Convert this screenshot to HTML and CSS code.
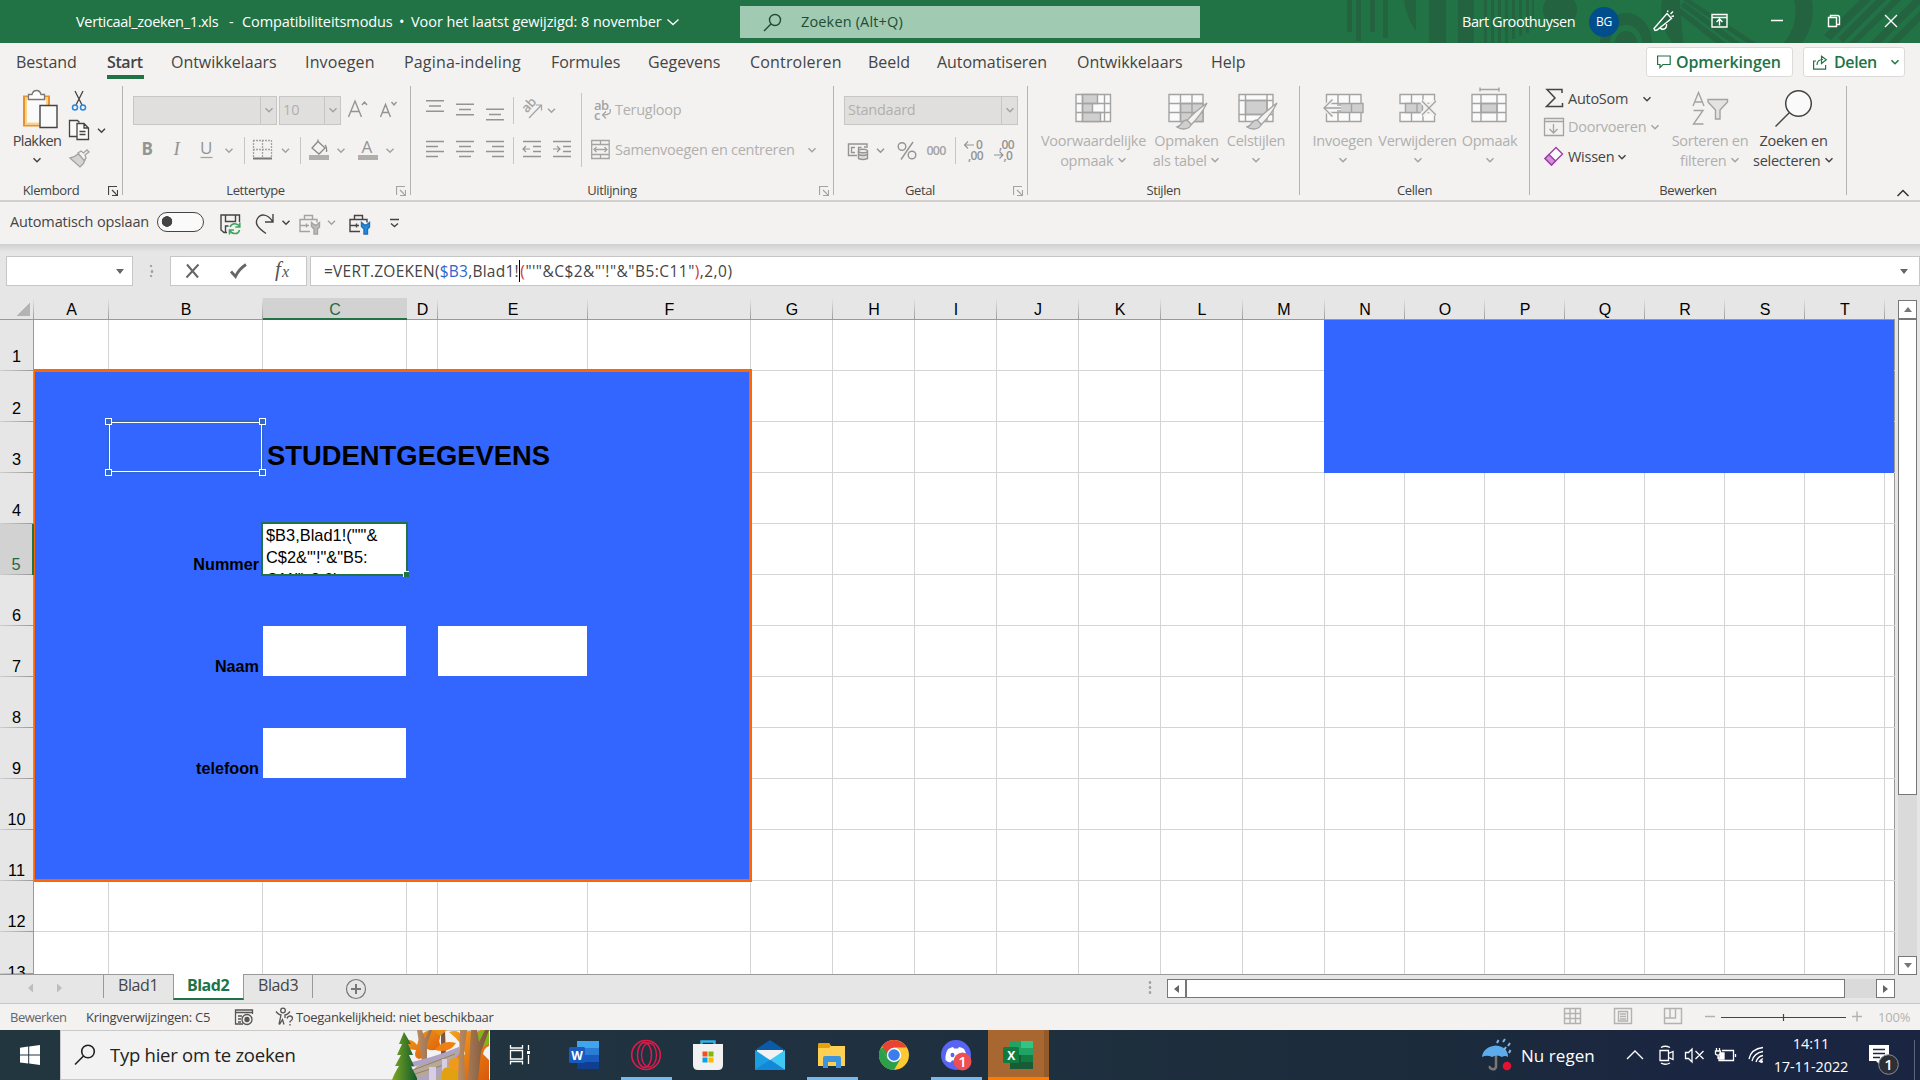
FILE: index.html
```
<!DOCTYPE html>
<html lang="nl">
<head>
<meta charset="utf-8">
<title>Verticaal_zoeken_1.xls</title>
<link rel="stylesheet" href="styles.css">
</head>
<body>
<svg class="defs" aria-hidden="true">
  <defs>
    <path id="cv" d="M-3.500-1.800L0 1.700L3.500-1.800" fill="none" stroke-width="1.500"/>
    <path id="launch" d="M.5 9V.5H9M4 4l5 5M9.500 4v5.500H4" fill="none" stroke-width="1.2"/>
    <g id="brush"><path d="M37 1C29 7 20 14 17 19l4 4C27 17 33 9 37 1z" fill="#f3f2f1" stroke="#a3a3a3" stroke-width="1.300"/><path d="M17 18c-6 0-5 6-10 7 4 3 13 3 14-3z" fill="#cfcfcf" stroke="#a3a3a3" stroke-width="1.300"/></g>
  </defs>
</svg>

<header class="titlebar">
  <svg class="pattern" viewBox="1300 0 620 43" width="620" height="43">
    <g fill="#23633f">
      <path d="M1347 0h5v32h-5zM1356 0h5v41h-5zM1370 0h5v32h-5zM1383 0h5v38h-5zM1404 0h12v31q-10-14-12-31zM1429 0h17v43h-17zM1458 0h16v43h-16zM1484 0h3v43h-3zM1491 0h3v43h-3zM1498 0h3v43h-3zM1505 0h3v43h-3zM1512 0h3v39h-3zM1519 0h3v36h-3zM1526 0h3v33h-3zM1532 0h2v28h-2z"/>
      <circle cx="1560" cy="10" r="17"/>
      <path d="M1600 43a26 30 0 0 1 52 0h-10a16 18 0 0 0-32 0zM1615 43a11 12 0 0 1 22 0z"/>
      <path d="M1668 0h12v8l4 43h-6q-12-24-2-43zM1662 0h18v8l-4 35h-4q-14-20-10-43zM1680 8l46 35h-10l-38-30zM1684 2l56 41h-9l-50-37zM1690 0l66 43h-9l-64-43zM1794 0h18q4 24-10 43h-18q16-20 10-43zM1824 35l36-35h11l-40 40zM1838 38l38-38h10l-43 43zM1852 40l40-40h9l-44 43h-8zM1870 43l43-43h7v4l-39 39zM1888 43l32-32v10l-22 22z"/>
    </g>
  </svg>
  <span class="t-file">Verticaal_zoeken_1.xls</span><span class="t-dash">-</span><span class="t-mode">Compatibiliteitsmodus</span><span class="t-dot">•</span><span class="t-mod">Voor het laatst gewijzigd: 8 november</span>
  <svg class="t-chev" viewBox="665 15 16 14" width="16" height="14"><path d="M667.500 19.500l5.500 5 5.500-5" fill="none" stroke="#fff" stroke-width="1.300"/></svg>
  <div class="search">
    <svg viewBox="0 0 20 20" width="20" height="20"><path d="M8.200 11.800L1 19" stroke="#1e4d33" stroke-width="1.400"/><circle cx="12" cy="8" r="5.500" fill="none" stroke="#1e4d33" stroke-width="1.400"/></svg>
    <span>Zoeken (Alt+Q)</span>
  </div>
  <span class="user">Bart Groothuysen</span>
  <span class="avatar">BG</span>
  <svg class="winbtns" viewBox="1640 0 280 43" width="280" height="43" fill="none" stroke="#fff" stroke-width="1.400">
    <path d="M1654 28.500l13-15 4.500 5-14.500 11.500-2 .5zM1660 27q1 3 4 2t2.500-5M1667.500 12l.5-1.500M1670.500 14l2.500-2.500M1671.500 16.500l2.500-.5"/>
    <path d="M1712 14.500h15v12.500h-15zM1712 17.500h15M1719.500 25.500v-6M1716.500 22l3-3 3 3"/>
    <path d="M1771 20.500h12M1828.500 17.500h8v9h-8z"/><path d="M1830.500 17.500v-2h7q2 0 2 2v7h-3"/>
    <path d="M1885 15l12 12M1897 15l-12 12"/>
  </svg>
</header>

<nav class="tabs">
  <span style="width:91px">Bestand</span><span class="on" style="width:64px">Start</span><span style="width:134px">Ontwikkelaars</span><span class="wide" style="width:99px">Invoegen</span><span class="wide" style="width:147px">Pagina-indeling</span><span style="width:97px">Formules</span><span style="width:102px">Gegevens</span><span class="wide" style="width:118px">Controleren</span><span style="width:69px">Beeld</span><span style="width:140px">Automatiseren</span><span style="width:134px">Ontwikkelaars</span><span style="width:80px">Help</span>
  <button class="pill comments"><svg viewBox="0 0 14 14" width="14" height="14" fill="none" stroke="#217346" stroke-width="1.200"><path d="M.6 1h12.600v8.500H6l-3 3v-3H.6z"/></svg>Opmerkingen</button>
  <button class="pill share"><svg viewBox="0 0 15 15" width="15" height="15" fill="none" stroke="#217346" stroke-width="1.200"><path d="M3 6H.6v8.200h12V10M4 10c0-4 3-5.500 6-5.500M8.500 1.200l4.800 3.500-4.800 3.800z"/></svg>Delen<svg class="pc" viewBox="-5 -4 10 8" width="10" height="8" stroke="#217346"><use href="#cv"/></svg></button>
</nav>

<section class="ribbon">
  <div class="group g-clip">
    <div class="body">
      <div class="big dark clipbtn">
        <svg viewBox="8 86 58 44" width="58" height="44"><path d="M24 96.500h25v29H24z" fill="#fafafa" stroke="#e8912d" stroke-width="2"/><path d="M26 98.500h21v25H26z" fill="none" stroke="#f8d588" stroke-width="2"/><path d="M28.500 99.500v-5h3.500q1-4 4.500-4t4.500 4h3.500v5z" fill="#fff" stroke="#777" stroke-width="1.300"/><path d="M40 105.500h17v22H40z" fill="#fafafa" stroke="#444" stroke-width="1.400"/></svg>
        <span>Plakken</span><span><svg class="c" viewBox="-5 -3 10 6"><use href="#cv"/></svg></span>
      </div>
      <div class="col">
        <svg viewBox="66 86 50 29" width="50" height="29" fill="none"><path d="M75 91l7 14M83 91l-7 14" stroke="#444" stroke-width="1.300"/><circle cx="75" cy="107.500" r="2.500" stroke="#2b88d8" stroke-width="1.500"/><circle cx="83" cy="107.500" r="2.500" stroke="#2b88d8" stroke-width="1.500"/></svg>
        <svg viewBox="66 115 50 30" width="50" height="30" fill="#fafafa" stroke="#444" stroke-width="1.300"><path d="M77 136.500h-7.500v-16h8l2 2"/><path d="M77 123.500h7l4.500 4.500v11.500H77zM84 123.500v4.500h4.500M79.500 131.500h6M79.500 134.500h6"/><use href="#cv" x="101.500" y="130.500"/></svg>
        <svg viewBox="66 145 50 30" width="50" height="30" fill="#d6d4d2" stroke="#a3a3a3" stroke-width="1.300"><path d="M70 158l10 9q4-3 5-7l-7-6q-3 3-8 4z"/><path d="M78 153l3-2 2.500 2 3.500-3 2 2-4 3 1 3-2 2.500z" fill="#f3f2f1"/></svg>
      </div>
    </div>
    <div class="name">Klembord</div>
    <svg class="launch dk" viewBox="0 0 10 10"><use href="#launch"/></svg>
  </div>

  <div class="group g-font">
    <div class="body rows">
      <div class="row">
        <div class="combo cb1"><i><svg class="c" viewBox="-5 -3 10 6"><use href="#cv"/></svg></i></div>
        <div class="combo cb2">10<i><svg class="c" viewBox="-5 -3 10 6"><use href="#cv"/></svg></i></div>
        <svg viewBox="341 95 66 30" width="66" height="30" fill="none" stroke="#949494" stroke-width="1.400"><path d="M348.500 117l6.500-16 6.500 16M351 111.500h8M362 105l2.500-3 2.500 3M380.500 117l5-12.500 5 12.500M382 112.500h7M391.500 102l2.500 3 2.500-3"/></svg>
      </div>
      <svg class="strip" viewBox="123 135 287 30" width="287" height="30" fill="none" stroke="#a3a3a3" stroke-width="1.300">
        <g class="let"><text x="141.500" y="155" class="b">B</text><text x="173.500" y="155" class="i">I</text><text x="200" y="154">U</text><text x="361.500" y="153">A</text></g>
        <path d="M200.500 157.500h12" /><use href="#cv" x="229" y="150.500"/>
        <path d="M244.500 137v27M300.500 137v27" stroke="#c8c6c4" stroke-width="1"/>
        <path d="M253.500 140v18M271.500 140v18M253 140.500h18M253 149.500h18M262.500 140v18" stroke-dasharray="2 1"/><path d="M253 158.500h19" stroke="#777" stroke-width="2"/>
        <use href="#cv" x="285.500" y="150.500"/>
        <path d="M312 148l6-6.500 7 6.500-6 6zM318 142v-2.500M325 145q2 2 1.500 7" stroke="#8a8a8a"/><path d="M309 155h20v5h-20zM358 155h20v5h-20z" fill="#b1afad" stroke="none"/>
        <use href="#cv" x="341" y="150.500"/><use href="#cv" x="390" y="150.500"/>
      </svg>
    </div>
    <div class="name">Lettertype</div>
    <svg class="launch" viewBox="0 0 10 10"><use href="#launch"/></svg>
  </div>

  <div class="group g-align">
    <div class="body">
      <svg class="strip" viewBox="411 86 180 90" width="180" height="90" fill="none" stroke="#949494" stroke-width="1.500">
        <path d="M426 100.700h18M429 106h12M426 111.200h18M456 104.200h18M459 109.500h12M456 114.700h18M486 109.200h18M489 114.500h12M486 119.700h18"/>
        <path d="M426 141.500h18M426 146.500h12M426 151.600h18M426 156.600h12M456 141.500h18M459 146.500h12M456 151.600h18M459 156.600h12M486 141.500h18M492 146.500h12M486 151.600h18M492 156.600h12"/>
        <path d="M523 141.500h18M533 146.500h8M533 151.600h8M523 156.600h18M553 141.500h18M563 146.500h8M563 151.600h8M553 156.600h18"/>
        <path d="M530 149h-7M526 146l-3 3 3 3M553 149h7M557 146l3 3-3 3" stroke-width="1.200"/>
        <path d="M513.500 97v27M513.500 137v27M581.500 93v74" stroke="#c8c6c4" stroke-width="1"/>
        <path d="M529 118l12.500-13M536 105h5.500v5.500" stroke="#a3a3a3" stroke-width="1.200"/>
        <text class="ab" transform="translate(527 113.500) rotate(-48)">ab</text>
        <use href="#cv" x="551.500" y="110.500" stroke="#a3a3a3"/>
      </svg>
      <div class="rows wrapcol">
        <div class="row"><svg viewBox="591 95 24 30" width="24" height="30"><text class="ab" x="594" y="109.500">ab</text><text class="ab" x="594" y="119.500">c</text><path d="M610 109q2 6-7 6M606 111.500l-3.500 3.500 3.500 3.500" fill="none" stroke="#a3a3a3" stroke-width="1.200"/></svg><span>Terugloop</span></div>
        <div class="row"><svg viewBox="591 135 24 30" width="24" height="30" fill="none" stroke="#a3a3a3" stroke-width="1.300"><path d="M591.700 140.500h17.500v18h-17.500zM591.700 144.500h17.500M591.700 154.500h17.500M600.500 140.500v4M600.500 154.500v4M594 149.500h13M596.500 147l-2.500 2.500 2.500 2.500M604.500 147l2.500 2.500-2.500 2.500"/></svg><span class="mc">Samenvoegen en centreren</span><svg class="c" viewBox="-5 -3 10 6"><use href="#cv"/></svg></div>
      </div>
    </div>
    <div class="name">Uitlijning</div>
    <svg class="launch" viewBox="0 0 10 10"><use href="#launch"/></svg>
  </div>

  <div class="group g-num">
    <div class="body rows">
      <div class="row"><div class="combo cb3">Standaard<i><svg class="c" viewBox="-5 -3 10 6"><use href="#cv"/></svg></i></div></div>
      <svg class="strip" viewBox="834 135 193 30" width="193" height="30" fill="none" stroke="#949494" stroke-width="1.400">
        <path d="M857 155.500h-8.500v-11.500h18.500v4"/><path d="M855 147.500h-3.500v5h3.500M858.500 153v-5.500h3M864 147h2" stroke-width="1.300"/>
        <path d="M858.500 151v7.500q4.500 2 9 0V151" fill="#ddd"/><ellipse cx="863" cy="151" rx="4.500" ry="1.800" fill="#eee"/><path d="M858.500 154.500q4.500 2 9 0"/>
        <use href="#cv" x="880.500" y="150.500"/>
        <g><circle cx="902" cy="146.500" r="3.800"/><circle cx="912" cy="155" r="3.800"/><path d="M913 142l-12 17.500"/></g>
        <text class="z3" x="926.500" y="154.500">000</text><path d="M955.500 137v27" stroke="#c8c6c4" stroke-width="1"/>
        <g class="dec"><text x="976" y="149">0</text><text x="968" y="159.500">,00</text><text x="999" y="149">,00</text><text x="1003.500" y="159.500">,0</text></g>
        <path d="M974 145h-9.500M968 141.500l-3.500 3.500 3.500 3.500M994 155h9M999.500 151.500l3.500 3.500-3.500 3.500" stroke-width="1.100"/>
      </svg>
    </div>
    <div class="name">Getal</div>
    <svg class="launch" viewBox="0 0 10 10"><use href="#launch"/></svg>
  </div>

  <div class="group g-style">
    <div class="body">
      <div class="big" style="width:118px"><svg viewBox="0 0 50 44" width="50" height="44" fill="#fafafa" stroke="#a3a3a3" stroke-width="1.400"><path d="M7 8.500h34.500v27H7z"/><path d="M13.500 8.500h15v9h-15zM13.500 17.500h10v9h-10zM13.500 26.500h18v9h-18z" fill="#cfcfcf"/><path d="M7 17.500h34.500M7 26.500h34.500M13.500 8v27M35.500 8v27"/></svg><span>Voorwaardelijke</span><span>opmaak <svg class="c" viewBox="-5 -3 10 6"><use href="#cv"/></svg></span></div>
      <div class="big" style="width:68px"><svg viewBox="0 0 50 44" width="50" height="44" fill="#fafafa" stroke="#a3a3a3" stroke-width="1.400"><path d="M7 8.500h34v27H7z"/><path d="M18.500 17.500H41v18H18.500z" fill="#cfcfcf"/><path d="M7 17.500h34M7 26.500h34M18.500 8v27M30 8v27"/><use href="#brush" x="8" y="16"/></svg><span>Opmaken</span><span>als tabel <svg class="c" viewBox="-5 -3 10 6"><use href="#cv"/></svg></span></div>
      <div class="big" style="width:71px"><svg viewBox="0 0 50 44" width="50" height="44" fill="#fafafa" stroke="#a3a3a3" stroke-width="1.400"><path d="M7 8.500h34v27H7z"/><path d="M13.500 14.500H35v14H13.500z" fill="#cfcfcf"/><path d="M7 14.500h34M7 28.500h34M13.500 8v27M35 8v27"/><use href="#brush" x="8" y="16"/></svg><span>Celstijlen</span><span><svg class="c" viewBox="-5 -3 10 6"><use href="#cv"/></svg></span></div>
    </div>
    <div class="name">Stijlen</div>
  </div>

  <div class="group g-cells">
    <div class="body">
      <div class="big" style="width:72px"><svg viewBox="0 0 50 44" width="50" height="44" fill="#fafafa" stroke="#a3a3a3" stroke-width="1.400"><path d="M8.500 8.500h34.500v27H8.500zM20 8v27M31.500 8v27"/><path d="M22 17.500h23v9H22z" fill="#cfcfcf"/><path d="M8.500 17.500h13M8.500 26.500h13M33.500 17.500v9"/><path d="M23 22H7M14.500 13.500L6 22l8.500 8.500" fill="none" stroke="#f3f2f1" stroke-width="4"/><path d="M23 22H7M14.500 13.500L6 22l8.500 8.500" fill="none"/></svg><span>Invoegen</span><span><svg class="c" viewBox="-5 -3 10 6"><use href="#cv"/></svg></span></div>
      <div class="big" style="width:78px"><svg viewBox="0 0 50 44" width="50" height="44" fill="#fafafa" stroke="#a3a3a3" stroke-width="1.400"><path d="M7 8.500h34.500v9H7zM7 26.500h34.500v9H7zM18.500 8v9M30 8v9M18.500 26v9M30 26v9"/><path d="M12.500 17.500h17v9h-17zM24 17.500v9" fill="#cfcfcf"/><path d="M29 15l13 14M42 15L29 29" stroke="#f3f2f1" stroke-width="5"/><path d="M29 15l14 14M43 15L29 29"/></svg><span>Verwijderen</span><span><svg class="c" viewBox="-5 -3 10 6"><use href="#cv"/></svg></span></div>
      <div class="big" style="width:66px"><svg viewBox="0 0 50 44" width="50" height="44" fill="#fafafa" stroke="#a3a3a3" stroke-width="1.400"><path d="M7 8.500h34v27H7z"/><path d="M16 17.500h16v9H16z" fill="#cfcfcf"/><path d="M7 17.500h34M7 26.500h34M16 8v27M32 8v27M15 3.500h19M15 1.500v4M34 1.500v4" fill="none"/></svg><span>Opmaak</span><span><svg class="c" viewBox="-5 -3 10 6"><use href="#cv"/></svg></span></div>
    </div>
    <div class="name">Cellen</div>
  </div>

  <div class="group g-edit">
    <div class="body">
      <div class="editcol">
        <div class="row dark"><svg viewBox="1540 86 28 26" width="28" height="26"><path d="M1562 93v-3.500h-15l8 8.500-8.500 8.500h16V103" fill="none" stroke="#444" stroke-width="1.500"/></svg><span style="width:74px">AutoSom</span><svg class="c" viewBox="-5 -3 10 6"><use href="#cv"/></svg></div>
        <div class="row"><svg viewBox="1540 112 28 30" width="28" height="30" fill="none" stroke="#a3a3a3" stroke-width="1.300"><path d="M1544.500 118.500h19v17h-19zM1544.500 121.500h19M1553.500 124v8.500M1549.500 129l4 4 4-4" fill="#f3f2f1"/></svg><span style="width:82px">Doorvoeren</span><svg class="c" viewBox="-5 -3 10 6"><use href="#cv"/></svg></div>
        <div class="row dark"><svg viewBox="1540 142 28 30" width="28" height="30" stroke="#9b3fa5" stroke-width="1.400"><path d="M1545 158.500l11-11 6.500 6.500-11 11z" fill="#fafafa"/><path d="M1545 158.500l4-4 6.500 6.500-4 4z" fill="#d48fd8"/></svg><span style="width:49px">Wissen</span><svg class="c" viewBox="-5 -3 10 6"><use href="#cv"/></svg></div>
      </div>
      <div class="big" style="width:80px"><svg viewBox="1685 86 50 44" width="50" height="44" fill="none" stroke="#a3a3a3" stroke-width="1.400"><path d="M1693 106l5.500-13.500 5.500 13.500M1695 102h7M1693.500 110.500h9.500l-9.500 13.500h10"/><path d="M1708 99.500h19.500v2.500l-7.500 8v9h-4.500v-9l-7.500-8z" fill="#e3e3e3"/></svg><span>Sorteren en</span><span>filteren <svg class="c" viewBox="-5 -3 10 6"><use href="#cv"/></svg></span></div>
      <div class="big dark" style="width:87px"><svg viewBox="1769 86 50 44" width="50" height="44" fill="#fafafa" stroke="#444" stroke-width="1.500"><circle cx="1798.500" cy="103.500" r="12.800"/><path d="M1789.500 112.500l-14 14"/></svg><span>Zoeken en</span><span>selecteren <svg class="c" viewBox="-5 -3 10 6"><use href="#cv"/></svg></span></div>
    </div>
    <div class="name">Bewerken</div>
  </div>
  <svg class="collapse" viewBox="0 0 14 8" width="14" height="8"><path d="M1.500 7L7 1.500 12.500 7" fill="none" stroke="#333" stroke-width="1.500"/></svg>
</section>

<section class="qat">
  <span class="auto">Automatisch opslaan</span>
  <span class="toggle"></span>
  <svg viewBox="210 202 200 42" width="200" height="42" fill="none" stroke="#444" stroke-width="1.400">
    <path d="M227 232.500h-3l-3-2.500v-15h18.500v7M225.500 215v6.500h10V215M225.500 232v-6h3"/><path d="M230 227q2-4 6-3t3.500 3M239.500 230q-1 4-5 3.500t-4.500-3.500M239.800 222.500v4.500h-4.500M229.500 234.500V230h4.500" stroke="#3ba55d" stroke-width="1.600"/>
    <path d="M273 214v8h-8M272.500 221.500c-5-8-12-8-15-3s0 9 8.500 15"/><use href="#cv" x="286" y="222.500"/>
    <g stroke="#a3a3a3"><path d="M310 231.500h-10v-12h17v3M304.500 219v-3.500h8v3.500M300 225.500h9M306.500 223.500v4"/><path d="M311.500 222.500v4l2.500 2.500v5h3.500v-5l2-2v-4.500l-3 2.500h-2z" fill="#bbb"/><use href="#cv" x="331.500" y="222.500"/></g>
    <path d="M360 231.500h-10v-12h17v3M354.500 219v-3.500h8v3.500M350 225.500h9M356.500 223.500v4"/><path d="M361.500 222.500v4l2.500 2.500v5h3.500v-5l2-2v-4.500l-3 2.500h-2z" fill="#2b88d8" stroke="#1a6fc0"/>
    <path d="M390 219.500h9M391 223.500l3.500 3 3.500-3"/>
  </svg>
</section>

<section class="formulabar">
  <div class="namebox"><b class="tri"></b></div>
  <div class="grip"></div>
  <div class="fxbox">
    <svg viewBox="171 257 134 28" width="134" height="28" fill="none" stroke="#666"><path d="M187 264.500l11 13M198.500 264.500l-12 13" stroke-width="2"/><path d="M231 271.500l4.500 5q3-7 10.500-12" stroke-width="2.800"/><text class="fx" x="275" y="276">f</text><text class="fx s" x="282" y="277">x</text></svg>
  </div>
  <div class="formula"><span class="fa">=VERT.ZOEKEN(<em class="blue">$B3</em>,Blad1!</span><b class="caret"></b><span class="fb"><em class="red">(</em>"'"&amp;C$2&amp;"'!"&amp;"B5:C11"<em class="red">)</em>,2,0)</span><b class="tri"></b></div>
</section>

<section class="sheetwrap">
  <div class="sheet">
    <div class="h corner"></div>
    <div class="h">A</div><div class="h">B</div><div class="h sel">C</div><div class="h">D</div><div class="h">E</div><div class="h">F</div><div class="h">G</div><div class="h">H</div><div class="h">I</div><div class="h">J</div><div class="h">K</div><div class="h">L</div><div class="h">M</div><div class="h">N</div><div class="h">O</div><div class="h">P</div><div class="h">Q</div><div class="h">R</div><div class="h">S</div><div class="h">T</div><div class="h last"></div>

    <div class="r up one" style="grid-row:2">1</div><div class="r up" style="grid-row:3">2</div><div class="r up" style="grid-row:4">3</div><div class="r up" style="grid-row:5">4</div><div class="r sel" style="grid-row:6">5</div><div class="r" style="grid-row:7">6</div><div class="r" style="grid-row:8">7</div><div class="r" style="grid-row:9">8</div><div class="r" style="grid-row:10">9</div><div class="r" style="grid-row:11">10</div><div class="r" style="grid-row:12">11</div><div class="r" style="grid-row:13">12</div><div class="r part" style="grid-row:14">13</div>

    <div class="cl" style="grid-column:2"></div><div class="cl" style="grid-column:3"></div><div class="cl" style="grid-column:4"></div><div class="cl" style="grid-column:5"></div><div class="cl" style="grid-column:6"></div><div class="cl" style="grid-column:7"></div><div class="cl" style="grid-column:8"></div><div class="cl" style="grid-column:9"></div><div class="cl" style="grid-column:10"></div><div class="cl" style="grid-column:11"></div><div class="cl" style="grid-column:12"></div><div class="cl" style="grid-column:13"></div><div class="cl" style="grid-column:14"></div><div class="cl" style="grid-column:15"></div><div class="cl" style="grid-column:16"></div><div class="cl" style="grid-column:17"></div><div class="cl" style="grid-column:18"></div><div class="cl" style="grid-column:19"></div><div class="cl" style="grid-column:20"></div><div class="cl" style="grid-column:21"></div><div class="cl edge" style="grid-column:22"></div>
    <div class="rl" style="grid-row:2"></div><div class="rl" style="grid-row:3"></div><div class="rl" style="grid-row:4"></div><div class="rl" style="grid-row:5"></div><div class="rl" style="grid-row:6"></div><div class="rl" style="grid-row:7"></div><div class="rl" style="grid-row:8"></div><div class="rl" style="grid-row:9"></div><div class="rl" style="grid-row:10"></div><div class="rl" style="grid-row:11"></div><div class="rl" style="grid-row:12"></div><div class="rl" style="grid-row:13"></div><div class="rl bottom" style="grid-row:14"></div>

    <div class="panel"></div>
    <div class="panel right"></div>
    <div class="refbox"><i></i><i></i><i></i><i></i></div>
    <div class="heading">STUDENTGEGEVENS</div>
    <div class="lab" style="grid-row:6">Nummer</div>
    <div class="lab" style="grid-row:8">Naam</div>
    <div class="lab" style="grid-row:10">telefoon</div>
    <div class="field" style="grid-area:8/4"></div>
    <div class="field" style="grid-area:8/6"></div>
    <div class="field" style="grid-area:10/4"></div>
    <div class="edit"><div class="edittext">$B3,Blad1!("'"&amp;<br>C$2&amp;"'!"&amp;"B5:<br>C11"),2,0)</div><i class="handle"></i></div>
  </div>
  <div class="vscroll"><div class="sb up"><b></b></div><div class="track"><div class="thumb"></div></div><div class="sb down"><b></b></div></div>
</section>

<section class="sheettabs">
  <svg viewBox="0 975 103 28" width="103" height="28" fill="#bdbdbd"><path d="M33 983.500v9l-5-4.500zM57 983.500v9l5-4.500z"/></svg>
  <span class="st first">Blad1</span><span class="st active">Blad2</span><span class="st third">Blad3</span>
  <svg class="plus" viewBox="0 0 22 22" width="22" height="22" fill="none" stroke="#777"><circle cx="11" cy="11" r="9.500" stroke-width="1.200"/><path d="M11 6v10M6 11h10" stroke-width="2"/></svg>
  <div class="grip h"></div>
  <div class="hscroll"><div class="sb left"><b></b></div><div class="hthumb"></div><div class="sb right"><b></b></div></div>
</section>

<footer class="status">
  <span class="s1">Bewerken</span><span class="s2">Kringverwijzingen: C5</span>
  <svg class="macro" viewBox="234 1007 20 20" width="20" height="20" fill="none" stroke="#555" stroke-width="1.300"><path d="M243 1024h-7.500v-14h17v4M236 1012.500h16.500M238 1016h4M238 1019h3M238 1022h3"/><circle cx="247" cy="1019.500" r="5"/><circle cx="247" cy="1019.500" r="2" fill="#555"/></svg>
  <svg class="acc" viewBox="274 1006 21 21" width="21" height="21" fill="none" stroke="#555" stroke-width="1.300"><circle cx="283" cy="1010.500" r="2.300"/><path d="M276 1011.500q3 3.500 5 3.500l-2 9.500M290 1011.500q-3 3.500-5 3.500v3M279.500 1024.500l3-5 1.500 5M287 1018.500q.5-2.500 3-2.500t2.500 2.500q0 1.500-2.500 3v1M290 1024v1.500"/></svg>
  <span class="s3">Toegankelijkheid: niet beschikbaar</span>
  <svg class="views" viewBox="1560 1005 308 25" width="308" height="25" fill="none" stroke="#b4b2b0" stroke-width="1.400"><path d="M1564.500 1008.500h16v15h-16zM1564.500 1013.500h16M1564.500 1018.500h16M1570 1008v16M1575.500 1008v16M1614.500 1008.500h17v15h-17zM1618.500 1011.500h9v9.500h-9zM1620 1014h6M1620 1016.500h6M1620 1019h6M1664.500 1008.500h17v15h-17zM1664.500 1018h11v-9.500M1670 1008.500v9.500M1705 1016.500h10M1852 1016.500h10M1857 1011.500v10"/><path d="M1721 1017.500h125M1783.500 1014v7" stroke="#444" stroke-width="1.200"/></svg>
  <span class="s4">100%</span>
</footer>

<footer class="taskbar">
  <div class="start"><svg viewBox="0 0 20 20" width="20" height="20" fill="#fff"><path d="M0 2.700l8.200-1.100v8H0zM9.200 1.400L20 0v9.600H9.200zM0 10.500h8.200v8L0 17.400zM9.200 10.500H20V20L9.200 18.600z"/></svg></div>
  <div class="tsearch">
    <svg class="mag" viewBox="0 0 22 22" width="22" height="22" fill="none" stroke="#222" stroke-width="1.600"><circle cx="14" cy="7.500" r="6.300"/><path d="M9.500 12L1 20.500"/></svg>
    <span>Typ hier om te zoeken</span>
    <svg class="autumn" viewBox="392 1030 98 50" width="98" height="50">
      <defs><linearGradient id="pine" x1="0" x2="1"><stop offset="0" stop-color="#7ea622"/><stop offset="1" stop-color="#0f5a2c"/></linearGradient><linearGradient id="leaf" x1="0" y1="0" x2="1" y2="1"><stop offset="0" stop-color="#f5a31c"/><stop offset="1" stop-color="#d9570b"/></linearGradient><linearGradient id="bark"><stop offset="0" stop-color="#b98c64"/><stop offset="1" stop-color="#7a5238"/></linearGradient></defs>
      <path d="M404 1042q8-5 14 3 3-12 10-14l6-1q10 1 6 11 2 4 0 7-5 4-12 1-1 9-8 10-6-2-3-9-10 0-13-8z" fill="url(#leaf)"/>
      <path d="M418 1030h5l3 9 4-9h3l-5 14v18h-5zM442 1030h4l1 28h-5z" fill="url(#bark)"/>
      <path d="M436 1050q7-11 21-7-7 11-21 7z" fill="#ef7f13"/><path d="M434 1030h14l-7 6z" fill="#e58d14"/>
      <path d="M404 1080l14-14 42-19v33z" fill="#b7a996"/><path d="M414 1070l42-16M409 1076l46-14M422 1064l36-14" stroke="#8f8174" fill="none"/>
      <path d="M403 1064q28-5 57-17v3q-20 11-54 19zM412 1080q26-6 48-28v6q-16 18-34 22z" fill="#aea3c5"/>
      <path d="M430 1067h7v13h-7zM443 1059h5v16h-5z" fill="#d6cee4"/>
      <path d="M450 1032q9-3 12 3 7-7 14-2 10-7 14 0v13q-5 2-6 8l6 6v20h-29q-4-8 0-14-8-8 0-12 3 3 5 0-2-11-16-22z" fill="url(#leaf)"/>
      <path d="M478 1034l-2 8 6 5 8-3v-14h-6z" fill="#82b51c"/><path d="M443 1080q-2-15 8-12 10-2 12 12z" fill="#e2a111"/><path d="M449 1064q4-9 11-5 3 8 0 12-8 0-11-7z" fill="#f09a1c"/>
      <path d="M461 1030h7l-3 22 1 28h-7zM472 1030h6l2 12 6-12h4l-8 22-3 28h-10z" fill="url(#bark)"/>
      <path d="M405 1032l7 12h-3l5 11h-4l5 11h-3l6 12v2h-25q2-6 7-14h-4l6-11h-4l5-11h-3z" fill="url(#pine)"/>
    </svg>
  </div>
  <div class="app tv"><svg viewBox="508 1043 24 24" width="24" height="24" fill="none" stroke="#fff" stroke-width="1.300"><path d="M510.500 1045v3h12v-3M510.500 1050.500h12v8.500h-12zM510.500 1064.500v-3h12v3M528.500 1045v5M528.500 1055v9"/><path d="M527 1051h3v3h-3z" fill="#fff" stroke="none"/></svg></div>
  <div class="app"><svg viewBox="0 0 30 28" width="30" height="28"><rect x="8" width="22" height="28" rx="1" fill="#2b7cd3"/><path d="M8 0h22v7H8z" fill="#41a5ee"/><path d="M8 14h22v7H8z" fill="#185abd"/><path d="M8 21h22v7H8z" fill="#103f91"/><rect y="6" width="16" height="16" rx="1.500" fill="#185abd"/><text class="logo" x="8" y="18.500">W</text></svg></div>
  <div class="app run"><svg viewBox="0 0 32 32" width="32" height="32" fill="none" stroke="#e5194a"><ellipse cx="16" cy="16" rx="14.300" ry="14.500" stroke-width="1.600"/><ellipse cx="14.500" cy="16" rx="7" ry="12.500" stroke-width="1.500"/><ellipse cx="19" cy="16" rx="7.500" ry="12" stroke-width="1.300"/></svg></div>
  <div class="app"><svg viewBox="0 0 30 32" width="30" height="32"><path d="M8.500 6V2.500h13V6" fill="none" stroke="#31b3e8" stroke-width="2.400"/><path d="M0 5h30v21q0 5-5 5H5q-5 0-5-5z" fill="#f1f1f1"/><path d="M9.500 12.500h5v5h-5z" fill="#f25022"/><path d="M15.500 12.500h5v5h-5z" fill="#7fba00"/><path d="M9.500 18.500h5v5h-5z" fill="#00a4ef"/><path d="M15.500 18.500h5v5h-5z" fill="#ffb900"/></svg></div>
  <div class="app"><svg viewBox="0 0 30 30" width="30" height="30"><path d="M0 10L15 0l15 10v4H0z" fill="#0a5aa8"/><path d="M2 10h26v10H2z" fill="#f2f2f2"/><path d="M0 10l30 20H0z" fill="#1b9de2"/><path d="M30 10v20L15 20z" fill="#3fc8f4"/><path d="M0 29.500L15 20l15 10H0z" fill="#1488d8"/></svg></div>
  <div class="app run"><svg viewBox="0 0 30 26" width="30" height="26"><path d="M1 3q0-2 2-2h9l2 3h14v20H1z" fill="#fdcf53"/><path d="M1 3q0-2 2-2h9l2 3-2 2H1z" fill="#e3a10c"/><path d="M6 26V16q0-2 2-2h14q2 0 2 2v10h-5v-6h-8v6z" fill="#3c95dd"/></svg></div>
  <div class="app"><svg viewBox="-15 -15 30 30" width="30" height="30"><circle r="15" fill="#fcc934"/><path d="M-13-7.500A15 15 0 0 0 0 15L6.500 3.700H-6.500z" fill="#2c9f4b"/><path d="M-13-7.500L-6.500 3.700 0 0V-7.500z" fill="#2c9f4b"/><path d="M-12-9Q-8-15 0-15T13-7.500H0L-7-2z" fill="#ea4335"/><circle r="7.200" fill="#fff"/><circle r="5.800" fill="#3b7ded"/></svg></div>
  <div class="app run"><svg viewBox="0 0 32 32" width="32" height="32"><circle cx="16" cy="16" r="15" fill="#5865f2"/><path d="M8 10q4-2 5-2l1 1.500h4L19 8q3 .5 5 2 3 5 2.500 11-3 2.500-5 2.500l-1.500-2h-8l-1.500 2q-3-.5-5-2.500-.5-6 2.500-11z" fill="#fff"/><ellipse cx="12.500" cy="16" rx="2" ry="2.300" fill="#5865f2"/><circle cx="22.500" cy="22.500" r="9" fill="#ed4f57"/><text class="badge1" x="22.500" y="28">1</text></svg></div>
  <div class="app excel"><svg viewBox="0 0 30 28" width="30" height="28"><path d="M7 0h23v28H7z" fill="#21a366"/><path d="M18 0h12v7H18z" fill="#33c481"/><path d="M7 14h11v14H7z" fill="#185c37"/><path d="M18 14h12v7H18z" fill="#107c41"/><path d="M18 21h12v7H18z" fill="#185c37"/><rect y="6" width="16" height="16" rx="1.500" fill="#107c41"/><text class="logo" x="8" y="18.500">X</text></svg></div>
  <svg class="umb" viewBox="1480 1038 34 34" width="34" height="34"><path d="M1496 1055v12q-1 3-4 2t-2-3" fill="none" stroke="#777" stroke-width="2.500"/><path d="M1482 1057q1-10 14-11.500 12 1.500 12 11.500-3-2-6 0-5-3-10 0-5-2.500-10 0z" fill="#5cabec"/><path d="M1497 1043l1.500-3M1503 1042l2-3M1508 1046l2-3M1504 1050l2-3M1509 1053l1.500-3" stroke="#7bb8ee" stroke-width="2"/><circle cx="1507" cy="1066" r="4.300" fill="#e81131"/></svg>
  <span class="rain">Nu regen</span>
  <svg class="tray" viewBox="1622 1040 148 30" width="148" height="30" fill="none" stroke="#fff" stroke-width="1.300"><path d="M1627 1059l8-8 8 8M1660 1050.500h8.500v10h-8.500zM1668.500 1053.500l4.500-2v8l-4.500-2M1661 1047.500q4-2.500 9 0M1661 1063q4 2.500 9 0M1685.500 1052.500h3l3.500-3.500v13l-3.500-3.500h-3zM1695.500 1051l8 8M1703.500 1051l-8 8M1722 1050.500h11.500v10h-14.500v-4M1735.500 1054v3M1715.500 1051h5v3q-2.500 2.500-5 0zM1716.500 1048v3M1719.500 1048v3M1718 1055v4"/><path d="M1720 1053h4v6h-4z" fill="#fff"/><path d="M1749 1059q2-10 14-11.500M1752 1061q2-8 11-9.500M1756 1062q1.500-5.500 7-6.500M1759 1062q1-2 4-3.500"/><circle cx="1761.500" cy="1061.500" r="1.500" fill="#fff" stroke="none"/></svg>
  <div class="clock"><span>14:11</span><span>17-11-2022</span></div>
  <svg class="notif" viewBox="1866 1040 54 40" width="54" height="40"><path d="M1869 1045h20v16h-9v4l-4-4h-7z" fill="#fff"/><path d="M1873 1049.500h12M1873 1053.500h12M1873 1057.500h7" stroke="#1b2742" stroke-width="1.300"/><circle cx="1888.500" cy="1064.500" r="9.800" fill="#2c2f36" stroke="#8d8f94"/><path d="M1914.500 1030v50" stroke="#5b6478"/><text class="nb" x="1888.500" y="1070">1</text></svg>
</footer>
</body>
</html>
```
FILE: styles.css
```
* { box-sizing: border-box; }
body {
  margin: 0;
  width: 1920px;
  height: 1080px;
  overflow: hidden;
  background: #f3f2f1;
  font: 14.5px/20px "Open Sans", "Noto Sans", sans-serif;
  letter-spacing: -0.27px;
  color: #444;
  white-space: nowrap;
}
svg { display: block; flex: none; }
svg.defs { position: absolute; width: 0; height: 0; }
em { font-style: normal; }
span, div { flex: none; }

/* title bar */
.titlebar { position: relative; display: flex; align-items: center; height: 43px; padding-left: 76px; background: #217346; color: #fff; }
.titlebar > * { position: relative; }
.titlebar .pattern { position: absolute; right: 0; top: 0; }
.t-file { width: 153px; letter-spacing: -0.33px; }
.t-dash { width: 13px; }
.t-mode { width: 160px; letter-spacing: -0.1px; }
.t-dot { width: 9px; margin-left: -3px; margin-right: 3px; }
.t-mod { width: 254px; letter-spacing: -0.07px; }
.search { display: flex; align-items: center; width: 460px; height: 32px; margin-left: 59px; padding-left: 23px; background: #a1cab3; color: #1e4d33; letter-spacing: 0.15px; }
.search svg { margin-right: 18px; }
.user { width: 127px; margin-left: 262px; letter-spacing: -0.45px; }
.avatar { width: 30px; height: 30px; border-radius: 50%; background: #004e8c; font-size: 12px; line-height: 30px; text-align: center; }
.winbtns { margin-left: 21px; }

/* ribbon tabs */
.tabs { display: flex; height: 37px; padding-left: 16px; font-size: 16px; line-height: 38px; letter-spacing: -0.05px; }
.tabs > span { position: relative; height: 37px; }
.tabs .wide { letter-spacing: 0.17px; }
.tabs .on { font-weight: 600; letter-spacing: -0.4px; }
.tabs .on::after { content: ""; position: absolute; left: 0; top: 32px; width: 37px; height: 4px; background: #217346; }
.pill { display: flex; align-items: center; height: 30px; margin-top: 4px; padding: 0 0 0 10px; border: 1px solid #dddbd9; border-radius: 3px; background: #fff; color: #217346; font: 600 16px/20px "Open Sans", sans-serif; letter-spacing: -0.1px; }
.pill svg { margin-right: 5px; }
.comments { width: 147px; margin-left: 355px; }
.share { width: 102px; margin-left: 10px; padding-left: 9px; letter-spacing: -0.4px; }
.share svg { margin-right: 6px; }
.share .pc { margin: 0 0 0 13px; }

/* ribbon */
.ribbon { display: flex; height: 122px; padding-top: 6px; border-bottom: 2px solid #d2d0ce; color: #b1afad; }
.group { position: relative; display: flex; flex-direction: column; height: 109px; border-right: 1px solid #b5b3b1; }
.body { display: flex; height: 95px; }
.rows { display: flex; flex-direction: column; gap: 10px; padding-top: 9px; }
.row { display: flex; align-items: center; height: 30px; }
.name { height: 18px; color: #444; font-size: 13px; line-height: 19px; letter-spacing: -0.4px; text-align: center; }
.launch { position: absolute; right: 4px; bottom: -1px; width: 10px; height: 10px; stroke: #a3a3a3; }
.launch.dk { stroke: #444; }
.c { display: inline-block; width: 10px; height: 6px; vertical-align: 3px; stroke: #a3a3a3; }
.dark { color: #444; }
.dark .c { stroke: #444; }
.big { display: flex; flex-direction: column; align-items: center; }
.big > svg { margin-bottom: 1px; }
.big > span { height: 20px; line-height: 20px; }
.g-clip { width: 123px; }
.g-clip .name { padding-right: 20px; }
.clipbtn { margin-left: 8px; width: 58px; letter-spacing: -0.6px; }
.g-font { width: 288px; }
.g-font .name { padding-right: 22px; }
.g-font .row { padding-left: 10px; }
.combo { display: flex; align-items: center; height: 29px; border: 1px solid #c8c6c4; background: #e1dfdd; padding-left: 3px; }
.combo i { display: flex; align-items: center; justify-content: center; height: 27px; width: 16px; margin-left: auto; border-left: 1px solid #c8c6c4; }
.cb1 { width: 144px; margin-right: 2px; }
.cb2 { width: 62px; letter-spacing: 0; }
.cb3 { width: 174px; margin-left: 10px; }
.let text { font: 17px "Open Sans", sans-serif; fill: #949494; stroke: none; }
.let .b { font-weight: 700; }
.let .i { font: italic 19px "Liberation Serif", serif; }
.ab { font: 600 13px "Open Sans", sans-serif; fill: #a3a3a3; stroke: none; letter-spacing: -0.5px; }
.z3 { font: 600 12.5px "Open Sans", sans-serif; fill: #a3a3a3; stroke: none; letter-spacing: -0.8px; }
.dec text { font: 600 12px "Open Sans", sans-serif; fill: #949494; stroke: none; letter-spacing: -0.7px; }
.g-align { width: 423px; }
.g-align .name { padding-right: 20px; }
.mc { width: 192px; }
.g-num { width: 194px; }
.g-num .name { padding-right: 21px; }
.g-style { width: 272px; }
.g-style .body { padding-left: 7px; }
.g-style .big > span { margin-left: -1px; }
.g-cells { width: 230px; }
.g-cells .body { padding-left: 7px; }
.g-cells .big > span { margin-left: -1px; }
.g-edit { width: 317px; }
.editcol { width: 140px; padding-left: 10px; }
.editcol .row:first-child { height: 26px; }
.collapse { margin: 103px 0 0 49px; }

/* quick access toolbar */
.qat { display: flex; align-items: center; height: 42px; padding-left: 10px; }
.auto { width: 147px; margin-top: -2px; letter-spacing: -0.15px; }
.toggle { width: 47px; height: 20px; border: 1.5px solid #444; border-radius: 10px; background: radial-gradient(circle at 9px 8.500px, #444 5px, transparent 5.600px) #fafafa; margin: -3px 6px 0 0; }

/* formula bar */
.formulabar { display: flex; height: 50px; padding: 12px 0 0 6px; background: linear-gradient(#cfcfcf, #e6e6e6 8px); }
.formulabar > div { height: 30px; border: 1px solid #c6c6c6; background: #fff; display: flex; align-items: center; }
.tri { border: 4px solid transparent; border-top: 5px solid #666; border-bottom: 0; margin-left: auto; }
.namebox { width: 127px; padding-right: 8px; }
.formulabar > .grip { width: 37px; border: 0; background: radial-gradient(circle, #a6a6a6 1.300px, transparent 1.600px) center/6px 5px no-repeat, radial-gradient(circle at 18px 10px, #a6a6a6 1.300px, transparent 1.600px), radial-gradient(circle at 18px 20px, #a6a6a6 1.300px, transparent 1.600px); }
.fxbox { width: 137px; }
.fx { font: italic 21px "Liberation Serif", serif; fill: #555; stroke: none; }
.fx.s { font-size: 16px; }
.formula { flex: 1; margin-left: 3px; padding: 0 11px 0 13px; font-size: 15.5px; color: #444; }
.formula span { display: block; }
.fa { letter-spacing: 0.23px; }
.fb { letter-spacing: 0.46px; }
.caret { width: 1.500px; height: 22px; background: #000; }
.blue { color: #2f66c9; }
.red { color: #d13438; }

/* worksheet */
.sheetwrap { display: flex; height: 681px; background: #e6e6e6; }
.sheet {
  display: grid;
  width: 1895px;
  grid-template-columns: 34px 75px 154px 144px 31px 150px 163px repeat(7, 82px) repeat(7, 80px) 10px;
  grid-template-rows: 26px repeat(12, 51px) 43px;
  background: linear-gradient(#e6e6e6 26px, #fff 26px);
  font-family: "Liberation Sans", Arial, sans-serif;
  letter-spacing: 0;
  color: #000;
}
.h { grid-row: 1; padding: 4px 0 0; border-bottom: 1px solid #999; font-size: 16px; line-height: 23px; text-align: center; background: linear-gradient(#e6e6e6, #9a9a9a) right 4px/1px 22px no-repeat; }
.h.sel { background: #d2d2d2; background-clip: content-box; border-bottom: 2px solid #217346; color: #1f6b41; }
.h.last { background: none; }
.h.corner { background: linear-gradient(to bottom right, transparent 50%, #b4b4b4 50%) 16px 8px/14px 14px no-repeat, linear-gradient(#e6e6e6, #9a9a9a) right 4px/1px 22px no-repeat; }
.r { grid-column: 1; display: flex; align-items: flex-end; justify-content: center; border-right: 1px solid #999; font-size: 16.3px; line-height: 22px; background: linear-gradient(to right, #cfcfcf, #999) bottom/100% 1px no-repeat #e6e6e6; }
.r.up { padding-bottom: 3px; }
.r.up.one { padding-bottom: 4px; }
.r.sel { color: #1f6b41; border-right: 2px solid #217346; background-color: #d2d2d2; }
.r.part { align-items: flex-start; overflow: hidden; padding-top: 29px; border-bottom: 1px solid #999; }
.cl { grid-row: 2 / 15; border-right: 1px solid #d4d4d4; }
.cl.edge { border-right-color: #999; }
.rl { grid-column: 2 / 23; border-bottom: 1px solid #d4d4d4; }
.rl.bottom { border-bottom-color: #999; }
.panel { grid-area: 3 / 2 / 13 / 8; margin: -2px -1px -1px 0; border: 3px solid #ff6600; border-left-width: 1px; background: #3366ff; }
.panel.right { grid-area: 2 / 15 / 5 / 23; margin: 0 1px 0 -1px; border: 0; }
.refbox { position: relative; grid-area: 4 / 3; margin: 0 1px 1px 0; border: 1px solid #fff; outline: 2px solid #3468c8; }
.refbox i { position: absolute; width: 7px; height: 7px; border: 1px solid #fff; background: #3468c8; }
.refbox i:nth-child(1) { left: -5px; top: -5px; }
.refbox i:nth-child(2) { right: -5px; top: -5px; }
.refbox i:nth-child(3) { left: -5px; bottom: -5px; }
.refbox i:nth-child(4) { right: -5px; bottom: -5px; }
.heading { grid-area: 4 / 4; align-self: end; width: 300px; padding: 0 0 2px 4px; font-size: 27.4px; line-height: 30px; font-weight: 700; }
.lab { grid-column: 3; align-self: end; padding: 0 4px 1px 0; text-align: right; font-size: 16.2px; line-height: 19px; font-weight: 700; }
.field { background: #fff; margin: 0 1px 1px 0; }
.edit { position: relative; grid-area: 6 / 4; margin: -2px -1px -1px -2px; border: 2px solid #217346; background: #fff; }
.edittext { height: 50px; overflow: hidden; padding: 0 0 0 3px; font-size: 16.4px; line-height: 22px; }
.handle { position: absolute; right: -3px; bottom: -3px; width: 6px; height: 6px; border: solid #fff; border-width: 1px 0 0 1px; background: #217346; }

.vscroll { display: flex; flex-direction: column; width: 25px; padding: 6px 3px 0; }
.sb { display: flex; align-items: center; justify-content: center; width: 19px; height: 19px; border: 1px solid #777; background: #fff; }
.sb b { border: 4px solid transparent; }
.sb.up b { border-top: 0; border-bottom: 5px solid #777; }
.sb.down b { border-bottom: 0; border-top: 5px solid #777; }
.sb.left b { border-left: 0; border-right: 5px solid #666; }
.sb.right b { border-right: 0; border-left: 5px solid #666; }
.track { height: 637px; background: #dadada; }
.thumb { height: 476px; border: 1px solid #777; background: #fff; }

/* sheet tabs */
.sheettabs { display: flex; height: 29px; background: #e6e6e6; border-bottom: 1px solid #c8c6c4; font-size: 16px; letter-spacing: -0.4px; line-height: 20px; }
.st { height: 23px; }
.st.first { width: 70px; padding-left: 14px; border-left: 1px solid #999; }
.st.active { position: relative; width: 71px; height: 26px; margin-top: -1px; padding-right: 1px; border: 1px solid #999; border-top: 0; border-bottom: 2px solid #217346; background: #fff; color: #217346; font-weight: 700; text-align: center; line-height: 22px; letter-spacing: -0.5px; }
.st.third { width: 69px; padding-left: 14px; border-right: 1px solid #999; }
.plus { margin: 3px 0 0 32px; }
.grip.h { width: 6px; height: 16px; padding: 0; margin: 5px 0 0 780px; border: 0; background: radial-gradient(circle, #a6a6a6 1.300px, transparent 1.600px) 0 0/6px 5px; }
.hscroll { display: flex; width: 728px; height: 19px; margin: 4px 0 0 14px; background: #dadada; }
.hthumb { width: 659px; margin-right: 31px; border: 1px solid #777; background: #fff; }

/* status bar */
.status { display: flex; height: 26px; font-size: 13px; line-height: 26px; letter-spacing: -0.36px; padding-left: 10px; }
.s1 { width: 76px; color: #666; letter-spacing: -0.5px; }
.s2 { width: 148px; letter-spacing: -0.25px; }
.macro { margin-top: 3px; }
.acc { margin: 2px 1px 0 20px; }
.s3 { width: 1264px; letter-spacing: -0.33px; }
.views { margin-top: 1px; }
.s4 { margin-left: 10px; color: #b4b2b0; letter-spacing: -0.2px; }

/* taskbar */
.taskbar { display: flex; height: 50px; background: linear-gradient(90deg, #22363f, #1f3140 45%, #1c2b3b 74%, #1a2542 90%); color: #fff; }
.start { display: flex; align-items: center; justify-content: center; width: 60px; }
.tsearch { display: flex; align-items: center; width: 430px; border: 1px solid #c9c9c9; border-width: 1px 0 1px 1px; background: #f2f2f2; color: #222; font-size: 18.5px; letter-spacing: -0.25px; }
.tsearch .mag { margin: 0 14px 0 13px; }
.tsearch span { width: 282px; }
.autumn { margin-left: -1px; }
.app { position: relative; display: flex; align-items: center; justify-content: center; width: 62px; }
.tv { width: 60px; }
.app.tv + .app { margin-left: 3px; }
.app.run::after { content: ""; position: absolute; left: 5.500px; bottom: 0; width: 51px; height: 3px; background: #76b9ed; }
.app.excel { width: 61px; margin-left: 1px; padding-right: 2px; background: linear-gradient(90deg, #a86730 56px, #935a2b 56px); border-bottom: 3px solid #ff7b00; }
.app.excel svg { margin-top: 3px; }
.logo { font: 700 12px "Open Sans", sans-serif; fill: #fff; text-anchor: middle; }
.badge1, .nb { font: 600 15px "Open Sans", sans-serif; fill: #fff; text-anchor: middle; }
.umb { margin: 8px 0 0 431px; }
.rain { width: 101px; margin-left: 7px; font-size: 17px; line-height: 51px; letter-spacing: 0.05px; }
.tray { margin-top: 10px; }
.clock { display: flex; flex-direction: column; align-items: center; width: 82px; margin-right: 14px; padding-top: 2px; line-height: 23px; letter-spacing: -0.1px; }
.notif { margin-top: 10px; }
```
